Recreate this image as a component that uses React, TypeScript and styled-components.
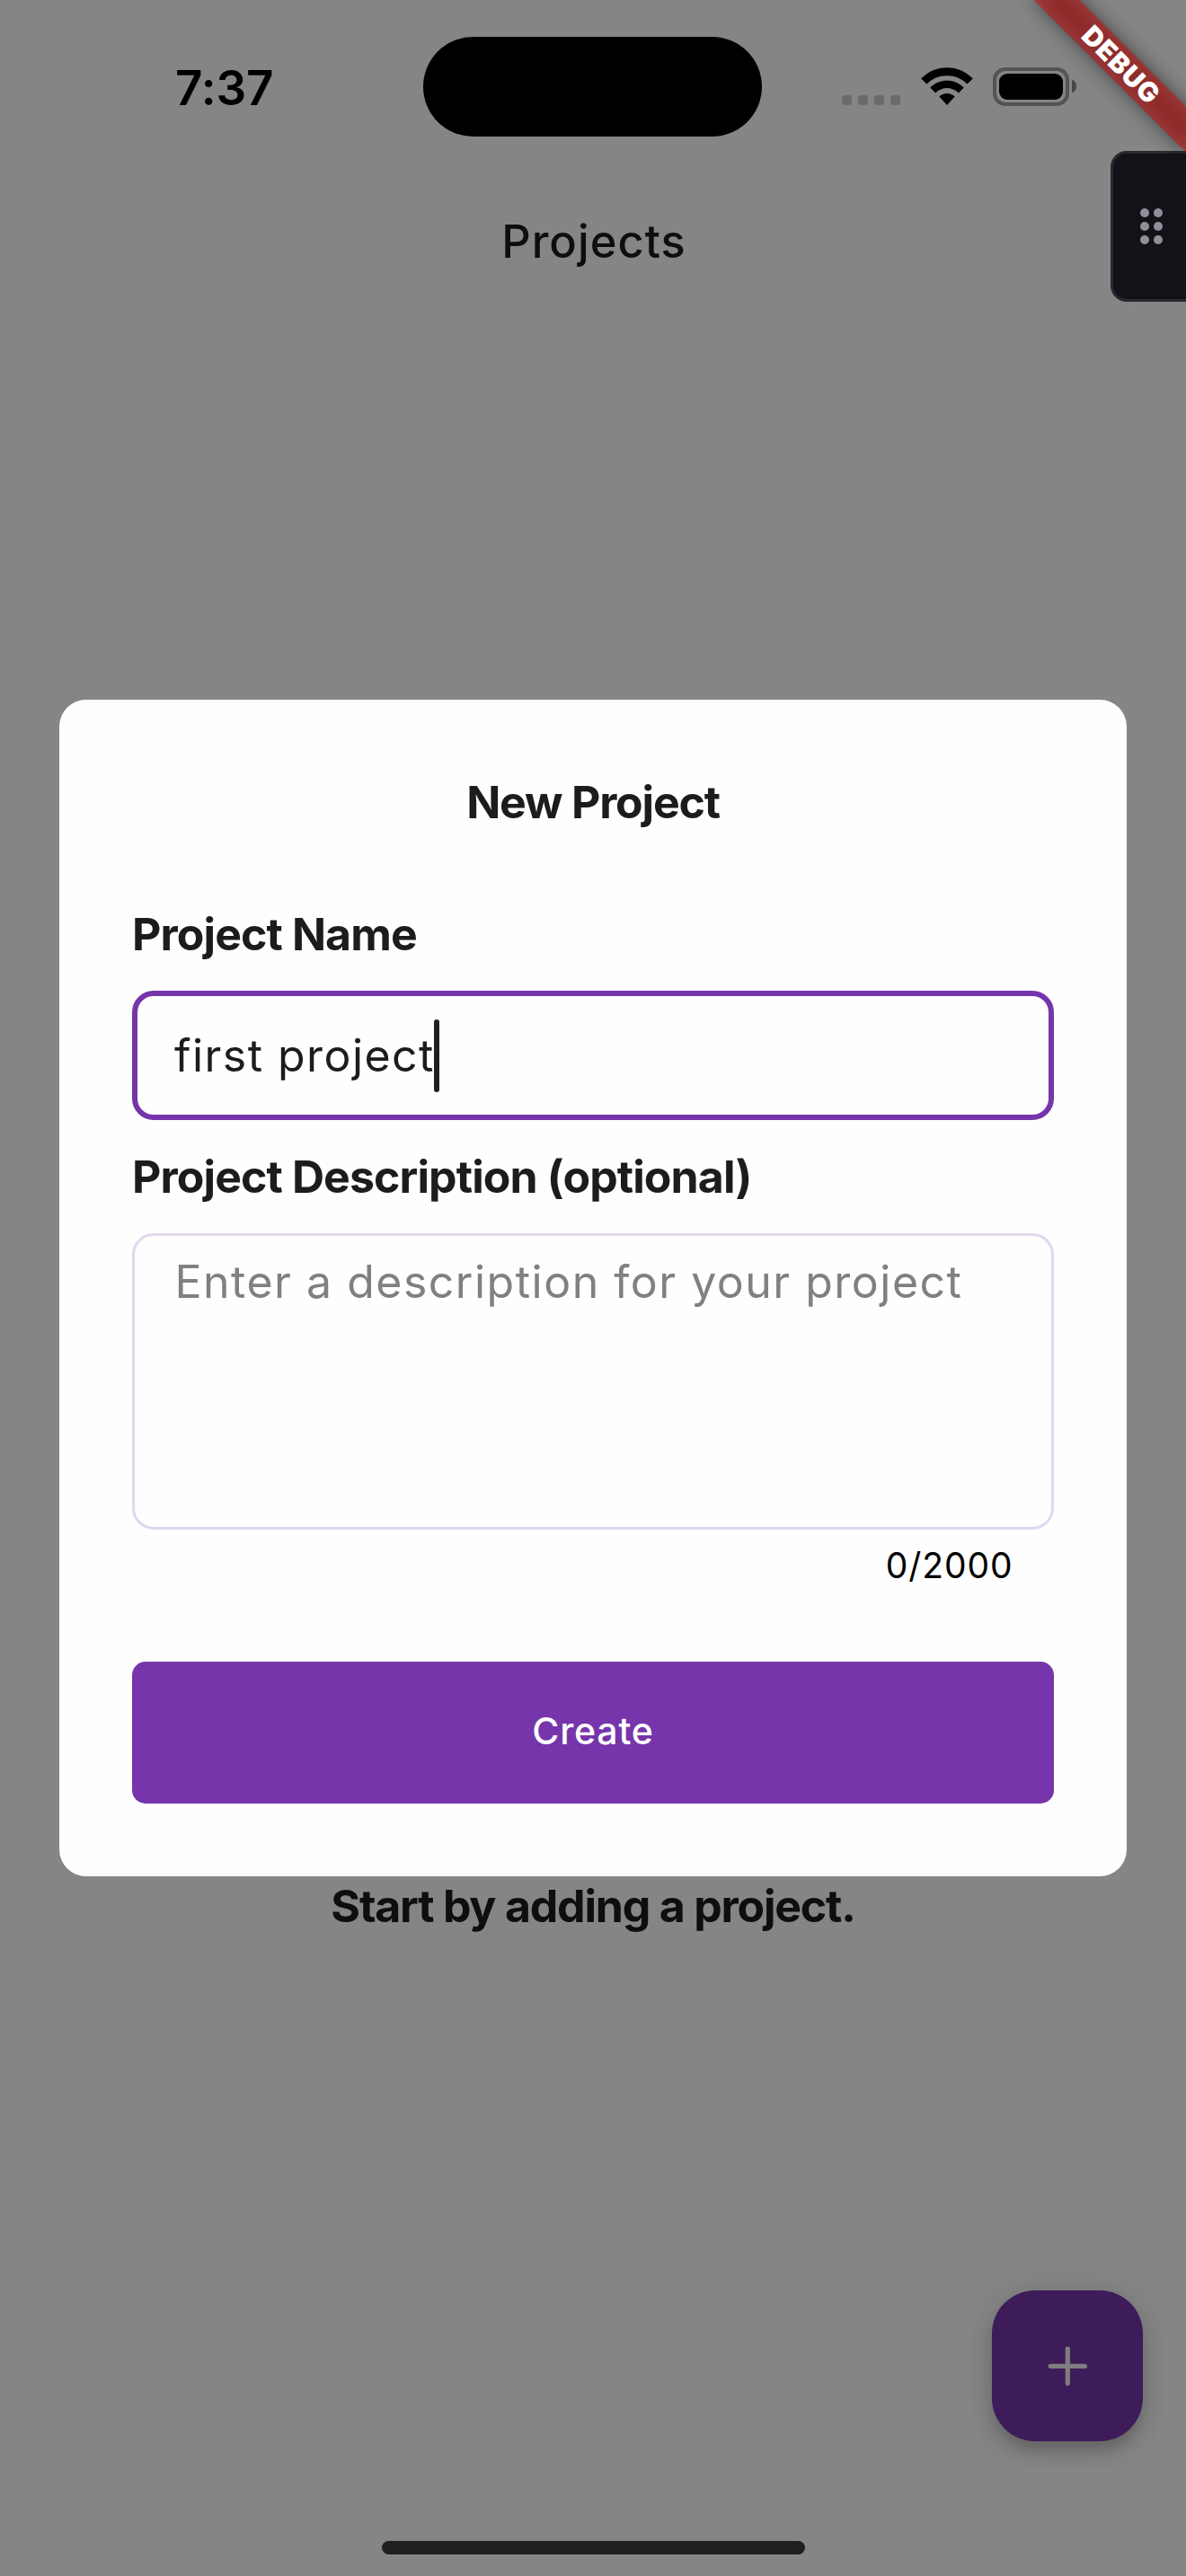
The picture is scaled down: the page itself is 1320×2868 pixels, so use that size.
import React from "react";
import styled, { createGlobalStyle } from "styled-components";

const GlobalStyle = createGlobalStyle`
  *, *::before, *::after { box-sizing: border-box; }
  body { margin: 0; background: #858585; }
`;

const Screen = styled.main`
  position: relative;
  display: flex;
  flex-direction: column;
  width: 1320px;
  height: 2868px;
  overflow: hidden;
  background: #858585;
  color: #0e0e0e;
  font-family: Inter, "Liberation Sans", sans-serif;
`;

const StatusBar = styled.header`
  display: grid;
  grid-template-columns: 471px 377px 1fr;
  height: 194px;
  padding-top: 41px;
`;

const Clock = styled.time`
  height: 60px;
  margin-top: 27px;
  padding-left: 195px;
  color: #000;
  font-size: 53px;
  font-weight: 600;
  line-height: 60px;
  letter-spacing: -0.1px;
`;

const Island = styled.div`
  height: 111px;
  border-radius: 56px;
  background: #000;
`;

const StatusIcons = styled.div`
  display: flex;
  align-items: flex-start;
  padding: 34px 0 0 89px;
`;

const Signal = styled.div`
  display: flex;
  gap: 7px;
  margin: 31px 23px 0 0;
`;

const SignalDot = styled.i`
  width: 11px;
  height: 11px;
  border-radius: 3.5px;
  background: #6a6a6a;
`;

const Battery = styled.div`
  width: 85px;
  height: 43px;
  margin-left: 22px;
  padding: 3px;
  border: 4px solid #545454;
  border-radius: 14px;
`;

const BatteryLevel = styled.div`
  height: 100%;
  border-radius: 9px;
  background: #000;
`;

const BatteryCap = styled.div`
  width: 5px;
  height: 14px;
  margin: 14px 0 0 3px;
  border-radius: 0 5px 5px 0 / 0 7px 7px 0;
  background: #484848;
`;

const PageTitle = styled.h1`
  height: 150px;
  margin: 0;
  padding-left: 2px;
  font-size: 50.5px;
  font-weight: 550;
  line-height: 149px;
  letter-spacing: 1.1px;
  text-align: center;
`;

const EmptyState = styled.section`
  flex: 1;
  padding-top: 1748px;
`;

const EmptyText = styled.p`
  margin: 0;
  font-size: 50px;
  font-weight: 700;
  line-height: 60px;
  letter-spacing: -1.2px;
  text-align: center;
`;

const AddButton = styled.button`
  display: grid;
  place-items: center;
  width: 168px;
  height: 168px;
  margin: 0 48px 111px auto;
  padding: 0;
  border: 0;
  border-radius: 48px;
  background: #3d1c59;
  box-shadow: 0 12px 15px -3px rgba(0, 0, 0, 0.15), 0 9px 27px rgba(0, 0, 0, 0.1), 0 3px 36px rgba(0, 0, 0, 0.07);
`;

const HomeIndicator = styled.div`
  width: 471px;
  height: 15px;
  margin: 0 auto 24px;
  border-radius: 8px;
  background: #202020;
`;

const Overlay = styled.div`
  position: absolute;
  inset: 0;
  display: flex;
  align-items: center;
  justify-content: center;
`;

const Dialog = styled.form`
  display: flex;
  flex-direction: column;
  width: 1188px;
  height: 1310px;
  padding: 84px 81px 81px;
  border-radius: 30px;
  background: #fefefe;
  color: #1c1c1c;
`;

const DialogTitle = styled.h2`
  margin: 0 0 87px;
  font-size: 50px;
  font-weight: 700;
  line-height: 60px;
  letter-spacing: -1.2px;
  text-align: center;
`;

const Label = styled.label`
  margin-bottom: 33px;
  font-size: 50px;
  font-weight: 700;
  line-height: 60px;
  letter-spacing: -0.9px;
`;

const NameField = styled.div`
  display: flex;
  align-items: center;
  height: 144px;
  margin-bottom: 33px;
  padding: 0 41px;
  border: 6px solid #7635aa;
  border-radius: 24px;
  font-size: 50px;
  line-height: 60px;
  letter-spacing: 1.45px;
`;

const Caret = styled.span`
  width: 6px;
  height: 81px;
  margin-left: -1px;
  border-radius: 3px;
  background: #202020;
`;

const DescriptionField = styled.div`
  height: 330px;
  padding: 21px 44.5px;
  border: 3px solid #e2d7ee;
  border-radius: 24px;
  color: #808083;
  font-size: 50px;
  line-height: 60px;
  letter-spacing: 1.5px;
  white-space: nowrap;
`;

const Counter = styled.div`
  margin: 16px 45.5px 83px 0;
  color: #000;
  font-size: 39px;
  line-height: 48px;
  letter-spacing: 0.9px;
  text-align: right;
`;

const CreateButton = styled.button`
  height: 158px;
  padding: 0 0 4px;
  border: 0;
  border-radius: 15px;
  background: #7635aa;
  color: #fff;
  font-family: inherit;
  font-size: 41px;
  font-weight: 500;
  line-height: 60px;
  letter-spacing: 0.8px;
`;

const DragHandle = styled.div`
  position: absolute;
  top: 168px;
  right: -6px;
  display: grid;
  grid-template-columns: 10px 10px;
  grid-auto-rows: 10px;
  gap: 5px;
  width: 90px;
  height: 168px;
  padding: 61px 0 0 29.5px;
  border: 3px solid #2a292e;
  border-radius: 18px 0 0 18px;
  background: #141118;
  box-shadow: 0 0 18px rgba(147, 143, 153, 0.4);
`;

const HandleDot = styled.i`
  border-radius: 50%;
  background: #938f99;
`;

const Ribbon = styled.div`
  position: absolute;
  top: 54px;
  left: 1128px;
  width: 240px;
  height: 36px;
  transform: rotate(45deg);

  &::before {
    content: "";
    position: absolute;
    inset: 0;
    background: rgba(0, 0, 0, 0.5);
    filter: blur(11px);
  }
`;

const RibbonText = styled.span`
  position: relative;
  display: block;
  height: 36px;
  background: rgba(183, 28, 28, 0.63);
  color: #fff;
  font-size: 30px;
  font-weight: 900;
  line-height: 36px;
  letter-spacing: 0.8px;
  text-align: center;
`;

const WifiIcon = () => (
  <svg width="58" height="43" viewBox="0 0 58 43">
    <path d="M0.2 12.6C16 -4 42 -4 57.8 12.6L51.6 18.6C39.5 6 18.5 6 6.4 18.6Z" />
    <path d="M10.2 22.6C20.5 12 37.5 12 47.8 22.6L41.9 28.6C34.5 21.2 23.5 21.2 16.1 28.6Z" />
    <path d="M20.3 32.6C24.8 27.9 33.2 27.9 37.7 32.6L29 42Z" />
  </svg>
);

const PlusIcon = () => (
  <svg width="44" height="44" viewBox="0 0 44 44" stroke="#7e7e7e" strokeWidth="5.2" strokeLinecap="round">
    <path d="M3.2 22.3H41.4M22.3 3.2V41.4" />
  </svg>
);

export default function App() {
  return (
    <>
      <GlobalStyle />
      <Screen>
        <StatusBar>
          <Clock>7:37</Clock>
          <Island />
          <StatusIcons>
            <Signal>
              {[0, 1, 2, 3].map((n) => (
                <SignalDot key={n} />
              ))}
            </Signal>
            <WifiIcon />
            <Battery>
              <BatteryLevel />
            </Battery>
            <BatteryCap />
          </StatusIcons>
        </StatusBar>
        <PageTitle>Projects</PageTitle>
        <EmptyState>
          <EmptyText>Start by adding a project.</EmptyText>
        </EmptyState>
        <AddButton type="button" aria-label="Add project">
          <PlusIcon />
        </AddButton>
        <HomeIndicator />

        <Overlay>
          <Dialog>
            <DialogTitle>New Project</DialogTitle>
            <Label>Project Name</Label>
            <NameField>
              <span>first project</span>
              <Caret />
            </NameField>
            <Label>Project Description (optional)</Label>
            <DescriptionField>Enter a description for your project</DescriptionField>
            <Counter>0/2000</Counter>
            <CreateButton type="button">Create</CreateButton>
          </Dialog>
        </Overlay>

        <DragHandle>
          {[0, 1, 2, 3, 4, 5].map((n) => (
            <HandleDot key={n} />
          ))}
        </DragHandle>
        <Ribbon>
          <RibbonText>DEBUG</RibbonText>
        </Ribbon>
      </Screen>
    </>
  );
}
